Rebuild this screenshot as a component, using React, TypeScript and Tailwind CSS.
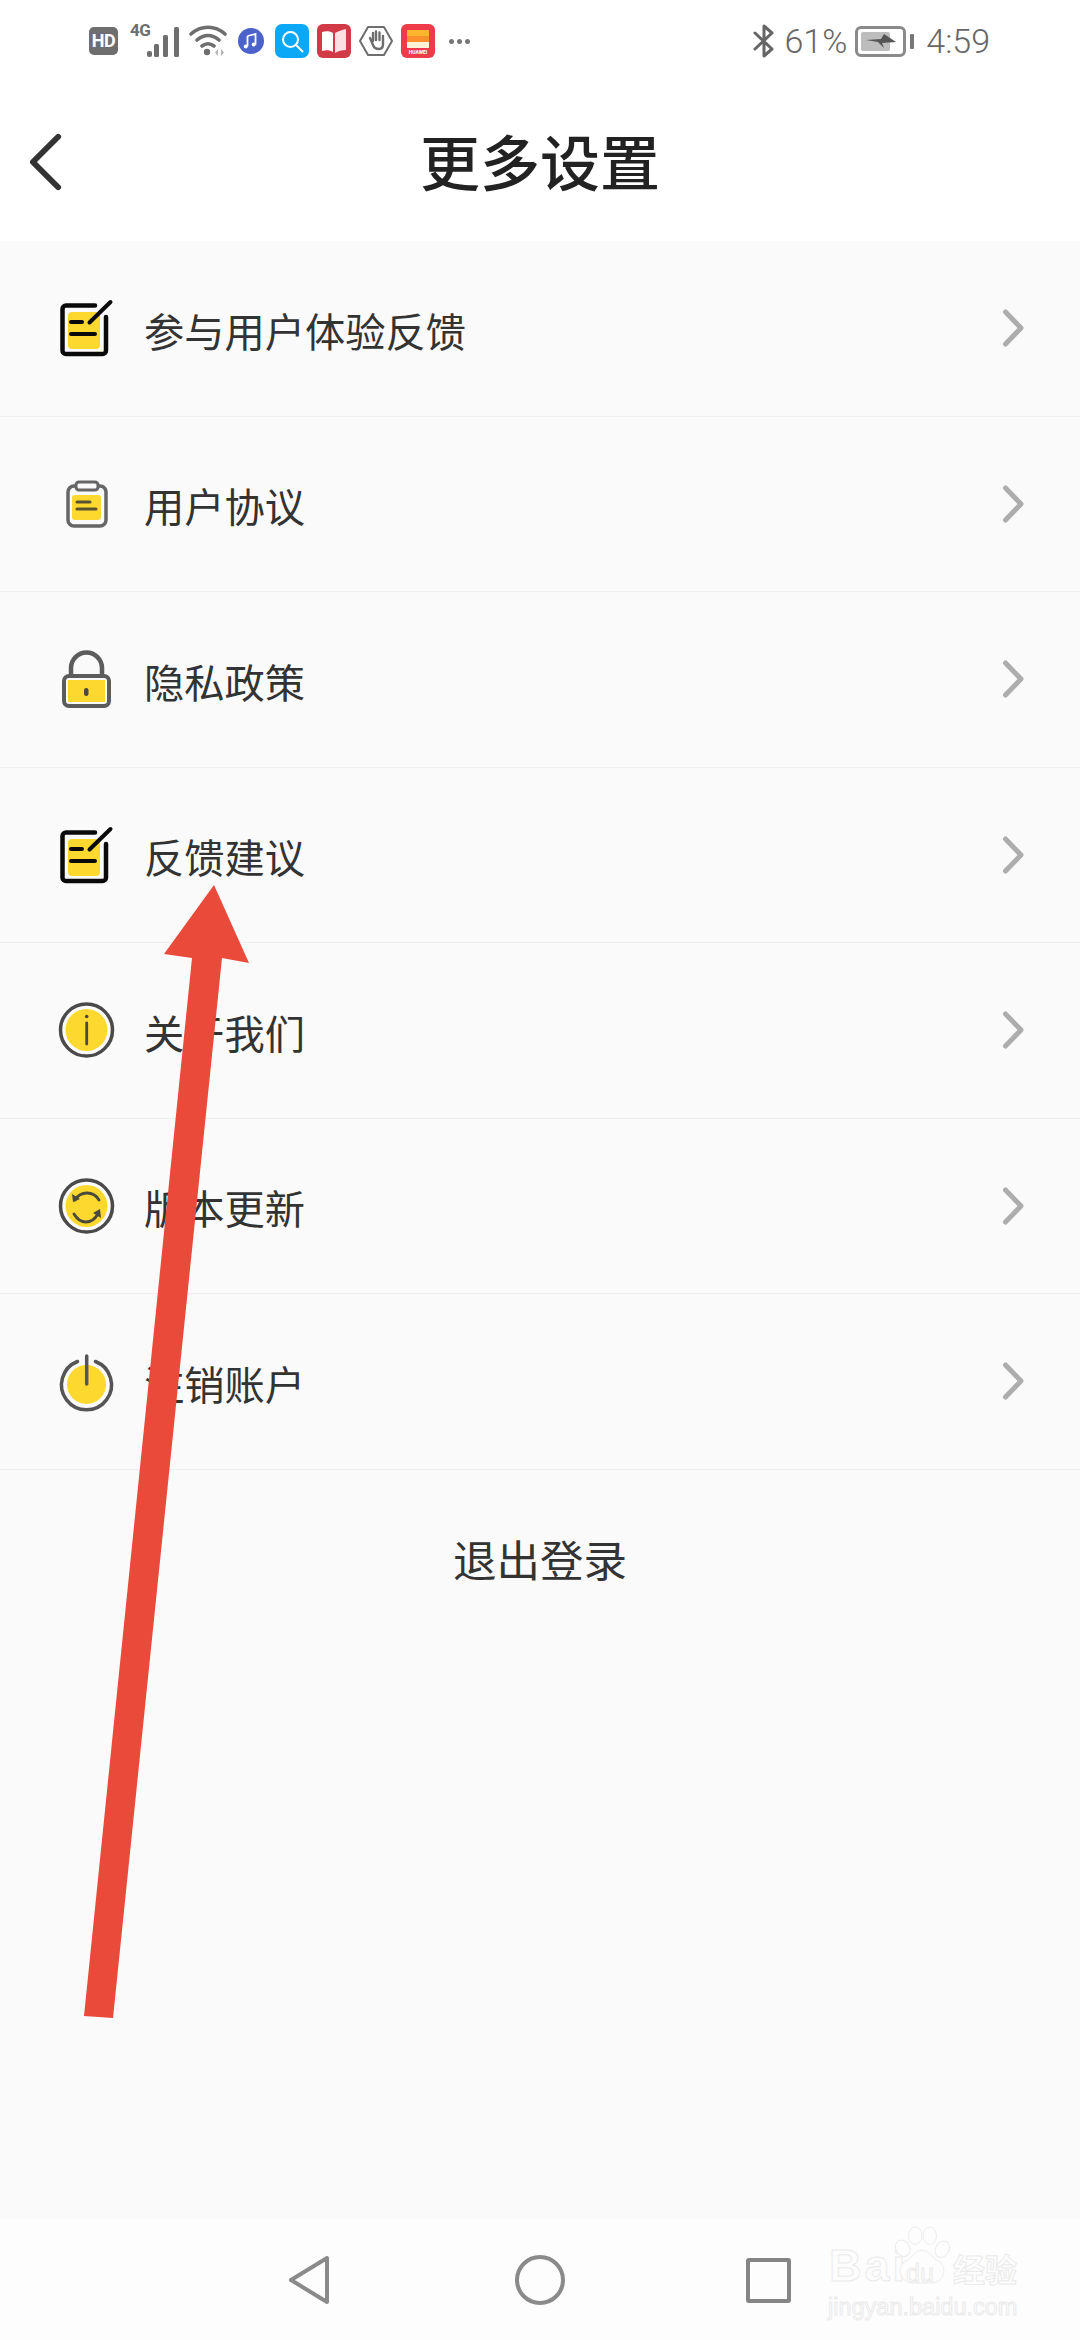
const CJK = 'font-["Noto_Sans_CJK_SC","Noto_Sans",sans-serif]';

function EditIcon() {
  return (
    <svg viewBox="0 0 64 64" className="w-16 h-16" fill="none" strokeLinecap="round" strokeLinejoin="round">
      <rect x="13" y="16" width="32" height="37" rx="4" fill="#fdd82f" />
      <path d="M40 9.5H11a3.5 3.5 0 0 0-3.5 3.5v41.500a3.500 3.500 0 0 0 3.500 3.500h36.500a3.500 3.500 0 0 0 3.500-3.500V21" stroke="#0a0a0a" strokeWidth="4.500" />
      <path d="M16 26h11M16 38h24M34.500 26.500 55.500 6" stroke="#0a0a0a" strokeWidth="4" />
    </svg>
  );
}

function ClipboardIcon() {
  return (
    <svg viewBox="0 0 64 64" className="w-16 h-16" fill="none" strokeLinecap="round">
      <rect x="13" y="14" width="38" height="40" rx="6" stroke="#666" strokeWidth="3.500" />
      <rect x="21" y="10" width="22" height="8" rx="3" fill="#fafafa" stroke="#666" strokeWidth="3" />
      <rect x="17" y="23" width="29" height="25" rx="3" fill="#fdd82f" />
      <path d="M22 30h13M22 37h19" stroke="#5a5230" strokeWidth="3" />
    </svg>
  );
}

function LockIcon() {
  return (
    <svg viewBox="0 0 64 64" className="w-16 h-16" fill="none">
      <path d="M16 28V21a15.500 15.500 0 0 1 31 0v7" stroke="#5c5c5c" strokeWidth="4.500" />
      <rect x="9" y="29" width="45" height="30" rx="5" fill="#fafafa" stroke="#5c5c5c" strokeWidth="4" />
      <rect x="13" y="33" width="37" height="22" fill="#fdd82f" />
      <rect x="29" y="41" width="4.500" height="8" rx="2.250" fill="#4a4a3a" />
    </svg>
  );
}

function InfoIcon() {
  return (
    <svg viewBox="0 0 64 64" className="w-16 h-16" fill="none" strokeLinecap="round">
      <circle cx="31.500" cy="32" r="26" stroke="#4a4a4a" strokeWidth="3.500" />
      <circle cx="31.500" cy="32" r="21" fill="#fdd82f" />
      <circle cx="31.700" cy="18.500" r="1.800" fill="#4a4a3a" />
      <path d="M31.700 25v21" stroke="#4a4a3a" strokeWidth="2.800" />
    </svg>
  );
}

function UpdateIcon() {
  return (
    <svg viewBox="0 0 64 64" className="w-16 h-16" fill="none" strokeLinecap="round">
      <circle cx="31.500" cy="32" r="26" stroke="#4a4a4a" strokeWidth="3.500" />
      <circle cx="31.500" cy="32" r="21" fill="#fdd82f" />
      <path d="M20 26c3-5 7-7 12-7s9 2 12 7M43 40c-3 5-7 8-12 8s-9-3-12-8" stroke="#4a4a3a" strokeWidth="2.800" />
      <path d="M17 20l1 8 7-3zM46 44l-1-9-7 4z" fill="#4a4a3a" />
    </svg>
  );
}

function PowerIcon() {
  return (
    <svg viewBox="0 0 64 64" className="w-16 h-16" fill="none" strokeLinecap="round">
      <circle cx="31.500" cy="35.500" r="19.500" fill="#fdd82f" />
      <path d="M22.500 12.500a25 25 0 1 0 18 0" stroke="#555" strokeWidth="3.500" />
      <path d="M31.700 7v28" stroke="#555" strokeWidth="3.500" />
    </svg>
  );
}

function StatusIcons() {
  return (
    <div className="flex items-center">
      <div className="w-[29px] h-[28px] bg-[#6e6e6e] rounded-[5px] flex items-center justify-center text-white text-[18px] font-bold leading-none font-['Roboto',sans-serif] tracking-tight">HD</div>
      <div className="ml-[12px] w-[59px] h-[34px] relative">
        <span className="absolute left-0 top-[-3px] text-[17px] font-bold leading-[18px] text-[#6e6e6e] font-['Roboto',sans-serif] tracking-tight">4G</span>
        <svg viewBox="0 0 36 32" className="absolute left-[15px] top-[2px] w-[36px] h-[32px]" fill="#6e6e6e">
          <rect x="2" y="25" width="5" height="6" rx="2" />
          <rect x="9" y="18" width="5" height="13" rx="1.500" />
          <rect x="18" y="9" width="5" height="22" rx="1.500" />
          <rect x="29" y="1" width="5" height="30" rx="1.500" />
        </svg>
      </div>
      <svg viewBox="0 0 38 32" className="w-[38px] h-[32px]" fill="none" stroke="#6e6e6e" strokeLinecap="round">
        <path d="M2 9c10-9 24-9 34 0M8 15c7-6 15-6 22 0M13 21c4-3 8-3 12 0" strokeWidth="3.600" />
        <circle cx="18" cy="27" r="3.200" fill="#6e6e6e" stroke="none" />
        <path d="M29 24v7l-3-3.500zM32 24v7l3-3.500z" fill="#b5b5b5" stroke="none" />
      </svg>
      <svg viewBox="0 0 28 28" className="ml-[10px] w-[28px] h-[28px]">
        <circle cx="14" cy="14" r="13" fill="#4a62c9" />
        <path d="M10.500 9l8-2v10.500M10.500 9v10.500" stroke="#fff" strokeWidth="1.800" fill="none" />
        <circle cx="8.700" cy="19.500" r="2" fill="#fff" />
        <circle cx="16.700" cy="17.500" r="2" fill="#fff" />
      </svg>
      <svg viewBox="0 0 34 34" className="ml-[10px] w-[34px] h-[34px]">
        <rect width="34" height="34" rx="7" fill="#0aa8f7" />
        <circle cx="15.500" cy="15.500" r="7.500" fill="none" stroke="#fff" strokeWidth="2" />
        <path d="M21 21l6.500 6.500" stroke="#fff" strokeWidth="2" strokeLinecap="round" />
      </svg>
      <svg viewBox="0 0 34 34" className="ml-[8px] w-[34px] h-[34px]">
        <rect width="34" height="34" rx="6" fill="#d23a48" />
        <path d="M5 8c4-1 8-1 11 1v19c-3-2-7-2-11-1z" fill="#fff" />
        <path d="M18 9c3-2 7-3 11-4v21c-4 0-8 1-11 3z" fill="#fbdfe2" />
      </svg>
      <svg viewBox="0 0 34 34" className="ml-[8px] w-[34px] h-[34px]" fill="none">
        <path d="M9 3h16l8 14-8 14H9L1 17z" stroke="#6e6e6e" strokeWidth="2" strokeLinejoin="round" />
        <path d="M11 14l3 7c1 3 3 4 6 4 3 0 4-2 4-5v-8M14 17V9M17 16V7.500M20.500 16V8.500M24 17v-5" stroke="#6e6e6e" strokeWidth="2.400" strokeLinecap="round" />
      </svg>
      <svg viewBox="0 0 34 34" className="ml-[8px] w-[34px] h-[34px]">
        <rect width="34" height="34" rx="6" fill="#ee3b4a" />
        <rect x="6" y="6" width="22" height="6" fill="#fdb52e" />
        <rect x="6" y="12" width="22" height="6" fill="#fd8f2c" />
        <rect x="6" y="18" width="22" height="6" fill="#fff3d6" />
        <text x="17" y="30" textAnchor="middle" fontSize="5" fontWeight="700" fill="#fff" fontFamily="Roboto, sans-serif">HUAWEI</text>
      </svg>
      <div className="ml-[14px] flex gap-[3px]">
        <span className="w-[5px] h-[5px] rounded-full bg-[#777]" />
        <span className="w-[5px] h-[5px] rounded-full bg-[#777]" />
        <span className="w-[5px] h-[5px] rounded-full bg-[#777]" />
      </div>
    </div>
  );
}

function StatusRight() {
  return (
    <div className="flex items-center text-[34px] leading-none text-[#666] font-['Roboto',sans-serif] font-light">
      <svg viewBox="0 0 22 34" className="w-[22px] h-[34px]" fill="none">
        <path d="M2 9l17 16-8 7V2l8 7L2 25" stroke="#666" strokeWidth="3" strokeLinecap="round" strokeLinejoin="round" />
      </svg>
      <span className="ml-[9px]">61%</span>
      <div className="ml-[8px] w-[51px] h-[31px] border-[3px] border-[#8a8a8a] rounded-[6px] p-[3px] relative">
        <div className="h-full w-[29px] bg-[#bdbdbd] rounded-[2px]" />
        <svg viewBox="0 0 30 14" className="absolute left-[8px] top-[5px] w-[30px] h-[14px]">
          <path d="M0 6L15 5 18 0 30 8 16 9 18 14 12 8z" fill="#555" />
        </svg>
      </div>
      <div className="ml-[4px] w-[4px] h-[15px] bg-[#777] rounded-[1px]" />
      <span className="ml-[12px]">4:59</span>
    </div>
  );
}

const rows = [
  { label: '参与用户体验反馈', icon: <EditIcon /> },
  { label: '用户协议', icon: <ClipboardIcon /> },
  { label: '隐私政策', icon: <LockIcon /> },
  { label: '反馈建议', icon: <EditIcon /> },
  { label: '关于我们', icon: <InfoIcon /> },
  { label: '版本更新', icon: <UpdateIcon /> },
  { label: '注销账户', icon: <PowerIcon /> },
];

export default function App() {
  return (
    <div className={`relative w-[1080px] h-[2340px] overflow-hidden bg-[#fafafa] flex flex-col ${CJK}`}>
      {/* status bar + title */}
      <div className="bg-white h-[241px] shrink-0">
        <div className="h-[82px] pl-[89px] pr-[90px] flex items-center justify-between">
          <StatusIcons />
          <StatusRight />
        </div>
        <div className="h-[159px] grid grid-cols-[1fr_auto_1fr] items-center">
          <svg viewBox="0 0 36 58" className="ml-[29px] w-[35px] h-[58px]" fill="none">
            <path d="M30 3 4 29l26 26" stroke="#333" strokeWidth="6" strokeLinecap="round" strokeLinejoin="round" />
          </svg>
          <h1 className="mb-[4px] text-[60px] leading-none font-medium text-[#222]">更多设置</h1>
          <div />
        </div>
      </div>

      {/* list */}
      <div className="flex flex-col">
        {rows.map((row) => (
          <div key={row.label} className="h-[175.5px] flex items-center pl-[55px] pr-[56px] border-b border-[#efefef]">
            <div className="w-16 h-16 shrink-0">{row.icon}</div>
            <span className="ml-[25px] pt-[3px] flex-1 text-[40.25px] leading-none text-[#333]">{row.label}</span>
            <svg viewBox="0 0 24 40" className="w-[24px] h-[40px]" fill="none">
              <path d="M5.500 4 21 20 5.500 36" stroke="#adadad" strokeWidth="5" strokeLinecap="round" strokeLinejoin="round" />
            </svg>
          </div>
        ))}
      </div>

      <div className="h-[179px] flex items-center justify-center text-[43.5px] leading-none text-[#333]">退出登录</div>

      {/* nav bar */}
      <div className="mt-auto h-[121px] bg-[#fdfdfd] relative flex items-start">
        <div className="pt-[36px] pl-[288px] flex items-center">
          <svg viewBox="0 0 42 50" className="w-[42px] h-[50px]" fill="none">
            <path d="M39 3v44L3 25z" stroke="#8a8a8a" strokeWidth="4" strokeLinejoin="round" />
          </svg>
          <div className="ml-[185px] w-[50px] h-[50px] rounded-full border-4 border-[#8a8a8a]" />
          <div className="ml-[181px] w-[45px] h-[45px] rounded-[3px] border-4 border-[#858585]" />
        </div>
      </div>

      {/* baidu watermark */}
      <div className="absolute left-[826px] top-[2222px] w-[200px] h-[100px] text-transparent [-webkit-text-stroke:1px_#ebebeb]">
        <span className="absolute left-[3px] top-[22px] text-[45px] leading-[44px] font-bold font-['Liberation_Sans',sans-serif] tracking-[3px]">Bai</span>
        <svg viewBox="0 0 60 60" className="absolute left-[67px] top-[3px] w-[58px] h-[60px]" fill="#fdfdfd" stroke="#ebebeb" strokeWidth="1">
          <ellipse cx="10" cy="23" rx="7" ry="9" transform="rotate(-30 10 23)" />
          <ellipse cx="23" cy="10" rx="7" ry="9" />
          <ellipse cx="38" cy="10" rx="7" ry="9" />
          <ellipse cx="51" cy="24" rx="7" ry="9" transform="rotate(30 51 24)" />
          <path d="M30 25c7 0 10 8 18 12 9 6 4 22-8 22H20C8 59 3 43 12 37c8-4 11-12 18-12z" />
        </svg>
        <span className="absolute left-[80px] top-[40px] text-[25px] leading-[22px] font-['Liberation_Sans',sans-serif]">du</span>
        <span className="absolute left-[127px] top-[28px] text-[32px] leading-[36px] font-bold">经验</span>
        <span className="absolute left-[2px] top-[71px] text-[23.5px] leading-[28px] font-['Liberation_Sans',sans-serif]">jingyan.baidu.com</span>
      </div>

      {/* hand-drawn annotation arrow */}
      <svg viewBox="0 0 1080 2340" className="absolute inset-0 w-[1080px] h-[2340px] pointer-events-none">
        <polygon points="214,885 249,963 222,958 113,2018 84,2016 192,958 164,954" fill="#ea4a39" />
      </svg>
    </div>
  );
}
